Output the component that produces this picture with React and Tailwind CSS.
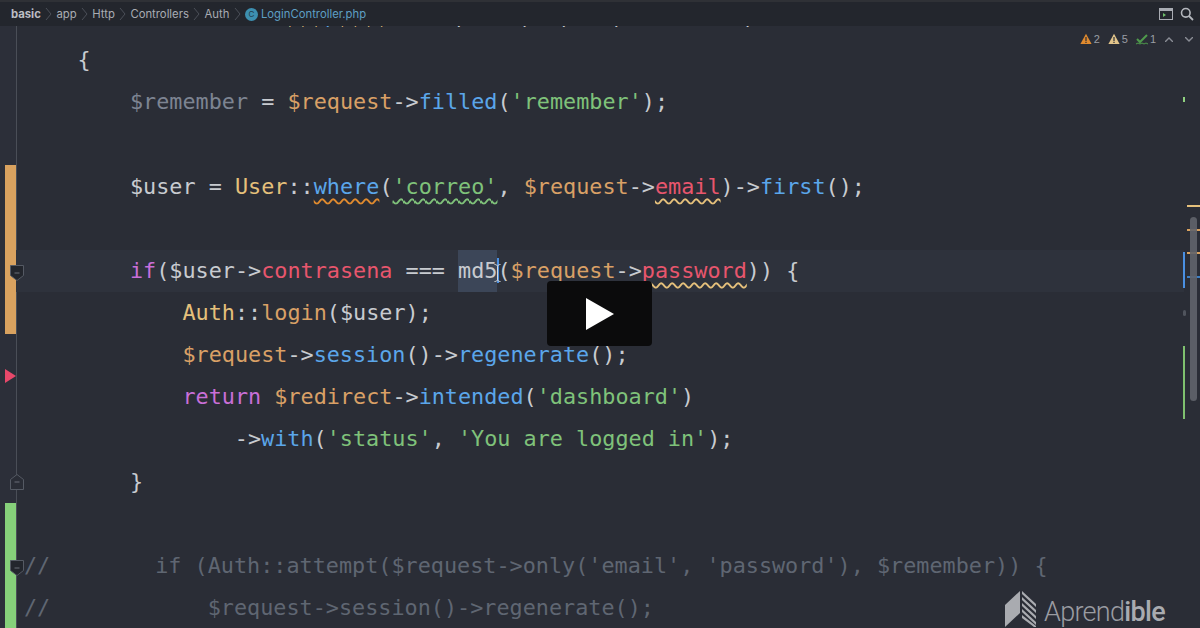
import React from 'react';

const C = {
  plain: 'text-[#c8cbd0]',
  dim: 'text-[#7d8492]',
  orange: 'text-[#d9a066]',
  yellow: 'text-[#e5c07b]',
  blue: 'text-[#5ba6ea]',
  green: 'text-[#7fc27a]',
  pink: 'text-[#c96fd8]',
  red: 'text-[#e8566d]',
  comment: 'text-[#5f6672]',
};

// squiggly underline like the IDE's inspections
const Squig = ({ color, children }) => (
  <span className={`underline decoration-wavy decoration-[1.5px] underline-offset-[4px] ${color}`}>{children}</span>
);

const T = ({ c, children }) => <span className={C[c]}>{children}</span>;

const lines = [
  {
    pad: 0,
    raw: 267,
    clipped: true,
    code: (
      <>
        <T c="yellow">$$$</T>
        <T c="blue">,</T>
        <T c="yellow">$$$$</T>
        <T c="plain">{'     ,    ,  ,   ,         ,'}</T>
      </>
    ),
  },
  { pad: 6, code: <T c="plain">{'{'}</T> },
  {
    pad: 10,
    code: (
      <>
        <T c="dim">$remember</T> <T c="plain">=</T> <T c="orange">$request</T>
        <T c="plain">-&gt;</T>
        <T c="blue">filled</T>
        <T c="plain">(</T>
        <T c="green">'remember'</T>
        <T c="plain">);</T>
      </>
    ),
  },
  { pad: 0, code: null },
  {
    pad: 10,
    code: (
      <>
        <T c="plain">$user =</T> <T c="yellow">User</T>
        <T c="plain">::</T>
        <Squig color="text-[#5ba6ea] decoration-[#e08a2e]">where</Squig>
        <T c="plain">(</T>
        <Squig color="text-[#7fc27a] decoration-[#7fc27a]">'correo'</Squig>
        <T c="plain">,</T> <T c="orange">$request</T>
        <T c="plain">-&gt;</T>
        <Squig color="text-[#e8566d] decoration-[#e5c07b]">email</Squig>
        <T c="plain">)-&gt;</T>
        <T c="blue">first</T>
        <T c="plain">();</T>
      </>
    ),
  },
  { pad: 0, code: null },
  {
    pad: 10,
    current: true,
    code: (
      <>
        <T c="pink">if</T>
        <T c="plain">($user-&gt;</T>
        <T c="red">contrasena</T> <T c="plain">===</T>{' '}
        <span className="bg-[#3c4658] text-[#c8cbd0] inline-block h-[42px]">md5</span>
        <T c="plain">(</T>
        <T c="orange">$request</T>
        <T c="plain">-&gt;</T>
        <Squig color="text-[#e8566d] decoration-[#e5c07b]">password</Squig>
        <T c="plain">)) {'{'}</T>
      </>
    ),
  },
  {
    pad: 14,
    code: (
      <>
        <T c="yellow">Auth</T>
        <T c="plain">::</T>
        <T c="orange">login</T>
        <T c="plain">($user);</T>
      </>
    ),
  },
  {
    pad: 14,
    code: (
      <>
        <T c="orange">$request</T>
        <T c="plain">-&gt;</T>
        <T c="blue">session</T>
        <T c="plain">()-&gt;</T>
        <T c="blue">regenerate</T>
        <T c="plain">();</T>
      </>
    ),
  },
  {
    pad: 14,
    code: (
      <>
        <T c="pink">return</T> <T c="orange">$redirect</T>
        <T c="plain">-&gt;</T>
        <T c="blue">intended</T>
        <T c="plain">(</T>
        <T c="green">'dashboard'</T>
        <T c="plain">)</T>
      </>
    ),
  },
  {
    pad: 18,
    code: (
      <>
        <T c="plain">-&gt;</T>
        <T c="blue">with</T>
        <T c="plain">(</T>
        <T c="green">'status'</T>
        <T c="plain">,</T> <T c="green">'You are logged in'</T>
        <T c="plain">);</T>
      </>
    ),
  },
  { pad: 10, code: <T c="plain">{'}'}</T> },
  { pad: 0, code: null },
  {
    raw: 8,
    code: <T c="comment">{"//        if (Auth::attempt($request->only('email', 'password'), $remember)) {"}</T>,
  },
  {
    raw: 8,
    code: <T c="comment">{'//            $request->session()->regenerate();'}</T>,
  },
];

const Crumb = ({ children, bold }) => (
  <>
    <span className={bold ? 'font-bold text-[#bcbec4]' : 'text-[#a9acb3]'}>{children}</span>
    <svg width="7" height="14" viewBox="0 0 7 14" className="mx-[4.3px]">
      <path d="M1 1l5 6-5 6" fill="none" stroke="#4b4f58" strokeWidth="1" />
    </svg>
  </>
);

const Warn = ({ fill, count }) => (
  <span className="flex items-center gap-[2px]">
    <svg width="12" height="12" viewBox="0 0 12 12">
      <path d="M6 .8 11.6 11H.4z" fill={fill} />
      <path d="M5.4 4h1.2v4H5.4zM5.4 8.8h1.2V10H5.4z" fill="#2a2d36" />
    </svg>
    <span>{count}</span>
  </span>
);

const FoldMark = ({ top, up, filled }) => (
  <svg width="14" height="16" viewBox="0 0 14 16" className="absolute left-[10px]" style={{ top }}>
    <path
      d={up ? 'M.5 15.5V5.5L7 .5l6.5 5v10z' : 'M.5.5h13v10L7 15.5.5 10.5z'}
      fill={filled ? '#23262d' : '#2a2d36'}
      stroke="#555a64"
    />
    <path d="M4.5 8h5" stroke="#6a6f79" />
  </svg>
);

export default function App() {
  return (
    <div
      className="relative w-[1200px] h-[628px] overflow-hidden flex flex-col bg-[#2a2d36]"
      style={{ fontFamily: '"DejaVu Sans Mono", monospace' }}
    >
      {/* breadcrumb bar */}
      <header
        className="z-10 h-[26px] shrink-0 flex items-center justify-between pl-[11px] pr-[6px] bg-[#23262d] border-t-2 border-[#2f3136] text-[11.3px]"
        style={{ fontFamily: '"Inter", "Liberation Sans", sans-serif' }}
      >
        <div className="flex items-center">
          <Crumb bold>basic</Crumb>
          <Crumb>app</Crumb>
          <Crumb>Http</Crumb>
          <Crumb>Controllers</Crumb>
          <Crumb>Auth</Crumb>
          <span className="w-[13px] h-[13px] rounded-full bg-[#3d8fb0] mr-[3px] flex items-center justify-center text-[8px] leading-none text-[#1f3a48]">
            C
          </span>
          <span className="text-[#5e9fc4]">LoginController.php</span>
        </div>
        <div className="flex items-center gap-[7px]">
          <svg width="14" height="12" viewBox="0 0 14 12">
            <rect x=".5" y=".5" width="13" height="11" fill="none" stroke="#a9acb3" />
            <path d="M1 1h12v2H1z" fill="#a9acb3" />
            <path d="M4 5l3 2-3 2z" fill="#6fbf6b" />
          </svg>
          <svg width="14" height="14" viewBox="0 0 14 14">
            <circle cx="5.8" cy="5.8" r="4.3" fill="none" stroke="#b4b7bd" strokeWidth="1.6" />
            <path d="M9 9l4 4" stroke="#b4b7bd" strokeWidth="1.8" />
          </svg>
        </div>
      </header>

      <div className="flex-1 flex min-h-0">
        {/* gutter */}
        <div className="w-[17px] shrink-0 flex flex-col pl-[5px] bg-[#2c2f39] border-r border-[#4a4e57]">
          <div className="h-[139px]" />
          <div className="h-[169px] bg-[#d9a25f]" />
          <div className="h-[169px]" />
          <div className="flex-1 bg-[#86d07a]" />
        </div>

        {/* code, scrolled so the first row is mostly hidden */}
        <div className="flex-1 min-w-0 overflow-hidden -ml-[1px] mr-[16px]">
          <div className="-mt-[29px] text-[21.8px] whitespace-pre">
            {lines.map((line, i) => (
              <div
                key={i}
                className={`h-[42.15px] ${line.clipped ? 'leading-[39px]' : 'leading-[42px]'} ${line.current ? 'bg-[#2e323c]' : ''}`}
                style={{ paddingLeft: line.raw ?? Math.max(0, line.pad * 13.1 - 17) }}
              >
                {line.code}
              </div>
            ))}
          </div>
        </div>
      </div>

      {/* overlays: inspection widget, markers, video button, watermark */}
      <div className="absolute right-[7px] top-[31px] flex items-center gap-[8px] text-[11px] text-[#9a9da5]" style={{ fontFamily: '"Liberation Sans", sans-serif' }}>
        <Warn fill="#e08a2e" count="2" />
        <Warn fill="#e2c48a" count="5" />
        <span className="flex items-center gap-[2px]">
          <svg width="12" height="12" viewBox="0 0 12 12">
            <path d="M1 6l3 3 7-7" fill="none" stroke="#4f9a4c" strokeWidth="2" />
            <path d="M0 11l2-1 2 1 2-1 2 1 2-1 2 1" fill="none" stroke="#4f9a4c" />
          </svg>
          <span>1</span>
        </span>
        <svg width="8" height="5" viewBox="0 0 8 5" className="ml-[1px]"><path d="M0 5l4-4 4 4" fill="none" stroke="#8a8d95" strokeWidth="1.4" /></svg>
        <svg width="8" height="5" viewBox="0 0 8 5" className="ml-[4px]"><path d="M0 0l4 4 4-4" fill="none" stroke="#8a8d95" strokeWidth="1.4" /></svg>
      </div>

      <FoldMark top={265} filled />
      <FoldMark top={474} up />
      <FoldMark top={560} filled />
      <svg width="11" height="14" viewBox="0 0 11 14" className="absolute left-[5px] top-[369px]">
        <path d="M0 0l11 7-11 7z" fill="#e8486a" />
      </svg>

      <span className="absolute left-[1183px] top-[97px] w-[2px] h-[5px] bg-[#8fd07f]" />
      <span className="absolute left-[1187px] top-[205px] w-[13px] h-[2px] bg-[#e5c07b]" />
      <span className="absolute left-[1187px] top-[229px] w-[13px] h-[2px] bg-[#d9a25f]" />
      <span className="absolute left-[1187px] top-[252px] w-[13px] h-[2px] bg-[#d9a25f]" />
      <span className="absolute left-[1187px] top-[276px] w-[13px] h-[2px] bg-[#3d7fc4]" />
      <span className="absolute left-[1183px] top-[252px] w-[2px] h-[36px] bg-[#4a90e2]" />
      <span className="absolute left-[1183px] top-[346px] w-[2px] h-[73px] bg-[#7fc06f]" />
      <span className="absolute left-[1183px] top-[310px] w-[3px] h-[6px] rounded-full bg-[#50545d]" />
      <span className="absolute left-[1190px] top-[217px] w-[7px] h-[184px] rounded-full bg-[#61646c]/90" />

      <div className="absolute left-[547px] top-[281px] w-[105px] h-[65px] rounded-[4px] bg-[#0b0b0c] flex items-center justify-center">
        <svg width="28" height="32" viewBox="0 0 28 32"><path d="M0 0l28 16L0 32z" fill="#fff" /></svg>
      </div>

      {/* caret and mouse i-beam */}
      <span className="absolute left-[497px] top-[258px] w-[2px] h-[25px] bg-[#4a90e2]" />
      <svg width="7" height="18" viewBox="0 0 7 18" className="absolute left-[494px] top-[264px]">
        <path d="M.5.5c2 0 3 1 3 2v13c0 1-1 2-3 2M6.5.5c-2 0-3 1-3 2v13c0 1 1 2 3 2" fill="none" stroke="#d5d7da" />
      </svg>

      <div className="absolute left-[1005px] top-[590px] flex items-start gap-[8px]">
        <svg width="31" height="38" viewBox="0 0 31 38">
          <path d="M0 15 15 1v22L0 37z" fill="#a9abb0" />
          <path d="M17 1l14 13v3L17 4zM17 7l14 13v3L17 10zM17 13l14 13v3L17 16zM17 19l14 13v3L17 22zM17 25l14 11v1h-2L17 28z" fill="#a9abb0" />
        </svg>
        <span className="text-[27px] leading-[27px] tracking-[-0.7px] font-light text-[#9a9ca2] mt-[9px]" style={{ fontFamily: 'Roboto, "Liberation Sans", sans-serif' }}>
          Aprend<span className="font-medium text-[#a9abb0]">ible</span>
        </span>
      </div>
    </div>
  );
}
